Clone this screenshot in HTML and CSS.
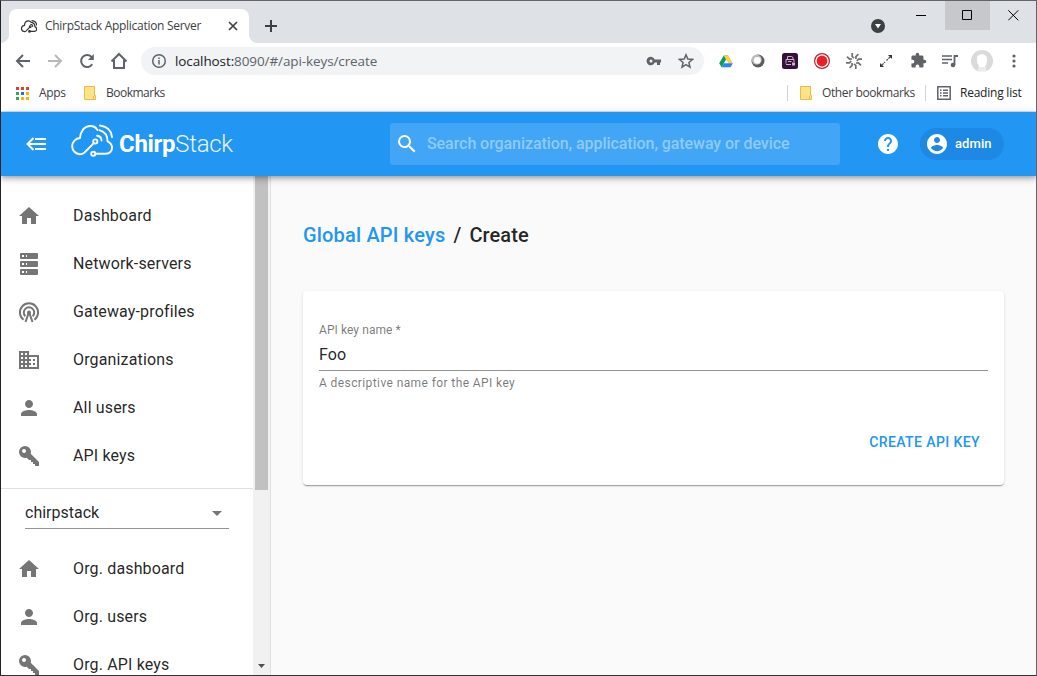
FILE: index.html
```
<!DOCTYPE html>
<html lang="en">
<head>
<meta charset="utf-8">
<title>ChirpStack Application Server</title>
<link rel="stylesheet" href="styles.css">
</head>
<body>
<svg class="defs" width="0" height="0" aria-hidden="true">
  <symbol id="home" viewBox="0 0 24 24"><path d="M10 20v-6h4v6h5v-8h3L12 3 2 12h3v8z"/></symbol>
  <symbol id="person" viewBox="0 0 24 24"><path d="M12 12c2.210 0 4-1.790 4-4s-1.790-4-4-4-4 1.790-4 4 1.790 4 4 4zm0 2c-2.670 0-8 1.340-8 4v2h16v-2c0-2.660-5.330-4-8-4z"/></symbol>
  <symbol id="key" viewBox="0 0 24 24"><path fill-rule="evenodd" d="M22 19V22H18V20H16V18H14V16H12L9.740 13.740C9.190 13.910 8.610 14 8 14A6 6 0 0 1 2 8A6 6 0 0 1 8 2A6 6 0 0 1 14 8C14 8.610 13.910 9.190 13.740 9.740L22 18V19M7 5A2 2 0 0 0 5 7A2 2 0 0 0 7 9A2 2 0 0 0 9 7A2 2 0 0 0 7 5Z"/></symbol>
  <symbol id="cloud" viewBox="0 0 42 34"><g fill="none" stroke="currentColor" stroke-linecap="round" stroke-linejoin="round"><path d="M22.600 19.300L13.500 28.500Q11.500 30.300 9 30.300C4.500 30 1.200 26.500 1.200 22.300c0-4.500 3.300-8 7.800-8.300C9.500 7 13.500 2 19.500 2c3.200 0 5.500 1.400 7 4M24.500 29.700h10.500c3.500 0 6-2.700 6-5.700 0-3-1.500-5.500-4.500-6.700 0-5-2.500-9.500-8-11.100"/><circle cx="24.300" cy="17.500" r="2.100"/><circle cx="22.300" cy="29.800" r="2.100"/><path d="M26 11.700c3 .3 4.500 2 4.500 4.800M29 1.500c7 1 11.500 5 12 11.500"/></g></symbol>
</svg>
<div class="window">
  <div class="tabstrip">
    <div class="tab">
      <svg class="favicon" width="16" height="13"><use href="#cloud"/></svg>
      <span class="tab-title">ChirpStack Application Server</span>
      <svg class="tab-close" width="10" height="10" viewBox="0 0 10 10"><path d="M1 1l8 8M9 1L1 9"/></svg>
    </div>
    <svg class="newtab" width="14" height="14" viewBox="0 0 14 14"><path d="M7 1v12M1 7h12"/></svg>
    <svg class="tabsearch" width="14" height="14" viewBox="0 0 14 14"><circle cx="7" cy="7" r="7" fill="#3c4043"/><path d="M4 5h6L7 9.500z" fill="#fff"/></svg>
    <div class="controls">
      <span class="control"><svg width="11" height="11" viewBox="0 0 11 11"><path d="M0 5.500h10"/></svg></span>
      <span class="control hover"><svg width="11" height="11" viewBox="0 0 11 11"><path d="M.5 .5h9v9h-9z"/></svg></span>
      <span class="control"><svg width="11" height="11" viewBox="0 0 11 11"><path d="M.3 .3l10 10M10.300 .3l-10 10"/></svg></span>
    </div>
  </div>
  <div class="toolbar">
    <span class="tool"><svg width="16" height="16" viewBox="0 0 16 16" class="line"><path d="M15 8H2M8 2L2 8l6 6"/></svg></span>
    <span class="tool faded"><svg width="16" height="16" viewBox="0 0 16 16" class="line"><path d="M1 8h13M8 2l6 6-6 6"/></svg></span>
    <span class="tool"><svg width="16" height="16" viewBox="0 0 16 16" class="line"><path d="M13.200 11.200A6 6 0 1 1 12.300 3.700l1.200 1.500"/><path d="M14.800 1v6H9z" fill="#5f6368" stroke="none"/></svg></span>
    <span class="tool"><svg width="18" height="18" viewBox="0 0 18 18" class="line"><path d="M1.500 9.500L9 2l7.500 7.500M4 8v8h10V8"/></svg></span>
    <div class="omnibox">
      <svg width="16" height="16" viewBox="0 0 16 16" class="info"><circle cx="8" cy="8" r="6.300"/><path d="M8 7v4.500M8 4.500v1.500"/></svg>
      <span class="url"><b>localhost:</b>8090/#/api-keys/create</span>
      <svg class="passkey" width="16" height="10" viewBox="0 0 16 10"><path fill-rule="evenodd" d="M8.700 3.600A4.200 4.200 0 1 0 8.700 6.400H11V9h3V6.400h1V3.600zM5 6.500a1.500 1.500 0 1 1 0-3 1.500 1.500 0 0 1 0 3z"/></svg>
      <svg class="star" width="16" height="16" viewBox="0 0 16 16"><path d="M8 1.800l1.800 4.300 4.700.4-3.600 3 1.100 4.600L8 11.700l-4 2.400 1.100-4.600-3.600-3 4.700-.4z"/></svg>
    </div>
    <span class="tool"><svg width="14" height="13" viewBox="0 0 14 13"><path d="M4.700 .5h4.600L7 4.600 2.600 12.300.2 8.200z" fill="#0b9d58"/><path d="M4.700.5h4.600l4.500 7.800H9.300z" fill="#ffcf3f"/><path d="M2.600 12.300l2.300-4h9l-2.400 4z" fill="#2684fc"/></svg></span>
    <span class="tool"><svg width="14" height="14" viewBox="0 0 14 14"><circle cx="7" cy="7" r="6.500" fill="#5c5c5c"/><circle cx="5.700" cy="5.700" r="5" fill="#bbb"/><circle cx="6.300" cy="6.300" r="3.400" fill="#fff"/></svg></span>
    <span class="tool"><svg width="16" height="16" viewBox="0 0 16 16"><rect width="16" height="16" rx="2.500" fill="#351039"/><path d="M5.500 6.500V3.500h4l1.500 1v2M4 10.500v-4h8V9M4 11.500h5M6 8.500h3.500" fill="none" stroke="#c9b4cc"/><path d="M10 9.500h3v3h-3z" fill="#c9b4cc"/></svg></span>
    <span class="tool"><svg width="16" height="16" viewBox="0 0 16 16"><circle cx="8" cy="8" r="7.400" fill="#fff" stroke="#b7232c" stroke-width="1.200"/><circle cx="8" cy="8" r="5.400" fill="#ee1c25"/></svg></span>
    <span class="tool"><svg width="16" height="16" viewBox="0 0 16 16"><g fill="none" stroke="#707070" stroke-width="1.700"><path id="spoke" d="M8 5.200L6.200 3.500V0"/><use href="#spoke" transform="rotate(45 8 8)"/><use href="#spoke" transform="rotate(90 8 8)"/><use href="#spoke" transform="rotate(135 8 8)"/><use href="#spoke" transform="rotate(180 8 8)"/><use href="#spoke" transform="rotate(225 8 8)"/><use href="#spoke" transform="rotate(270 8 8)"/><use href="#spoke" transform="rotate(315 8 8)"/></g></svg></span>
    <span class="tool"><svg width="14" height="14" viewBox="0 0 14 14"><path d="M9 1h4v4zM1 9v4h4z" fill="#333"/><path d="M11.500 2.500l-4 4M2.500 11.500L6 8" stroke="#555" stroke-width="1.400" stroke-dasharray="3 .8"/></svg></span>
    <span class="tool shift"><svg width="17" height="17" viewBox="0 0 24 24" fill="#5f6368"><path d="M20.500 11H19V7c0-1.100-.9-2-2-2h-4V3.500a2.500 2.500 0 0 0-5 0V5H4c-1.100 0-2 .9-2 2v3.800h1.500a2.700 2.700 0 0 1 0 5.400H2V20c0 1.100.9 2 2 2h3.800v-1.500a2.700 2.700 0 0 1 5.400 0V22H17c1.100 0 2-.9 2-2v-4h1.500a2.500 2.500 0 0 0 0-5z"/></svg></span>
    <span class="tool"><svg width="16" height="14" viewBox="0 0 16 14"><path d="M0 2h10M0 5.500h10M0 9h6" stroke="#5f6368" stroke-width="1.600"/><path d="M12.500 11V2H16" fill="none" stroke="#5f6368" stroke-width="1.800"/><circle cx="11" cy="11" r="2.300" fill="#5f6368"/></svg></span>
    <span class="tool"><svg width="22" height="22" viewBox="0 0 22 22"><circle cx="11" cy="11" r="11" fill="#dadada"/><path d="M6 8c0-5 10-5 10 1 0 5-1 6-2 7l1 5q-4 2-8 0l1-5C6 14 6 11 6 8z" fill="#fff"/><path d="M8 17h6l1 4q-4 1.500-8 0z" fill="#e9edf1"/></svg></span>
    <span class="tool"><svg width="4" height="14" viewBox="0 0 4 14" fill="#5f6368"><circle cx="2" cy="2" r="1.600"/><circle cx="2" cy="7" r="1.600"/><circle cx="2" cy="12" r="1.600"/></svg></span>
  </div>
  <div class="bookmarks">
    <svg class="apps" width="13" height="13" viewBox="0 0 13 13"><path fill="#ea3a30" d="M0 0h3v3H0zM5 0h3v3H5zM10 0h3v3h-3z"/><path fill="#34a853" d="M0 5h3v3H0zM0 10h3v3H0z"/><path fill="#1a73e8" d="M5 5h3v3H5z"/><path fill="#fbb10b" d="M10 5h3v3h-3zM5 10h3v3H5zM10 10h3v3h-3z"/></svg>
    <span class="bm-apps">Apps</span>
    <svg class="folder" width="12" height="14" viewBox="0 0 12 14"><path d="M.5 .5h10v9h1v4H.5z"/><path d="M9.500 13v-3"/></svg>
    <span class="bm-folder">Bookmarks</span>
    <i class="sep first"></i>
    <svg class="folder other" width="12" height="14" viewBox="0 0 12 14"><path d="M.5 .5h10v9h1v4H.5z"/><path d="M9.500 13v-3"/></svg>
    <span class="bm-other">Other bookmarks</span>
    <i class="sep"></i>
    <svg class="list-icon" width="14" height="14" viewBox="0 0 14 14"><path d="M.8.8h12.400v12.400H.8zM3 4.200h1.500M3 7h1.500M3 9.800h1.500M6 4.200h5M6 7h5M6 9.800h5"/></svg>
    <span class="bm-reading">Reading list</span>
  </div>
  <div class="app">
    <header class="appbar">
      <svg class="menu" width="20" height="14" viewBox="0 0 20 14"><path d="M9 2h11M3 7h17M9 12h11M7.500 1l-6 6 6 6"/></svg>
      <div class="logo"><svg width="42" height="34"><use href="#cloud"/></svg><span class="wordmark"><b>Chirp</b><span>Stack</span></span></div>
      <div class="search"><svg width="24" height="24" viewBox="0 0 24 24"><path d="M15.500 14h-.79l-.28-.27A6.470 6.470 0 0 0 16 9.500 6.500 6.500 0 1 0 9.500 16c1.610 0 3.090-.59 4.230-1.570l.27.28v.79l5 4.990L20.490 19l-4.990-5zm-6 0C7.010 14 5 11.990 5 9.500S7.010 5 9.500 5 14 7.010 14 9.500 11.990 14 9.500 14z"/></svg><span>Search organization, application, gateway or device</span></div>
      <svg class="help" width="24" height="24" viewBox="0 0 24 24"><path d="M12 2C6.480 2 2 6.480 2 12s4.480 10 10 10 10-4.480 10-10S17.520 2 12 2zm1 17h-2v-2h2v2zm2.070-7.750l-.9.920C13.450 12.900 13 13.500 13 15h-2v-.5c0-1.100.45-2.100 1.170-2.830l1.240-1.260c.37-.36.59-.86.59-1.410 0-1.100-.9-2-2-2s-2 .9-2 2H8c0-2.210 1.790-4 4-4s4 1.790 4 4c0 .88-.36 1.680-.93 2.250z"/></svg>
      <div class="chip"><svg width="24" height="24" viewBox="0 0 24 24"><path d="M12 2C6.480 2 2 6.480 2 12s4.480 10 10 10 10-4.480 10-10S17.520 2 12 2zm0 3c1.660 0 3 1.340 3 3s-1.340 3-3 3-3-1.340-3-3 1.340-3 3-3zm0 14.200c-2.500 0-4.710-1.280-6-3.220.03-1.990 4-3.080 6-3.080 1.990 0 5.970 1.090 6 3.080-1.290 1.940-3.500 3.220-6 3.220z"/></svg><span>admin</span></div>
    </header>
    <div class="body">
      <nav class="sidebar">
        <ul class="menu-list">
          <li><svg><use href="#home"/></svg>Dashboard</li>
          <li><svg viewBox="0 0 24 24"><path fill-rule="evenodd" d="M4 1h16a1 1 0 0 1 1 1v4a1 1 0 0 1-1 1H4a1 1 0 0 1-1-1V2a1 1 0 0 1 1-1zM4 9h16a1 1 0 0 1 1 1v4a1 1 0 0 1-1 1H4a1 1 0 0 1-1-1v-4a1 1 0 0 1 1-1zM4 17h16a1 1 0 0 1 1 1v4a1 1 0 0 1-1 1H4a1 1 0 0 1-1-1v-4a1 1 0 0 1 1-1zM9 5h1V3H9zM9 13h1v-2H9zM9 21h1v-2H9zM5 3v2h2V3zM5 11v2h2v-2zM5 19v2h2v-2z"/></svg>Network-servers</li>
          <li><svg viewBox="0 0 24 24"><g fill="none" stroke="#757575" stroke-width="2"><path d="M6.500 19.700A9.100 9.100 0 1 1 17.500 19.700M8.300 16.200A5.200 5.200 0 1 1 15.700 16.200"/><path d="M8.500 22l3-8.500h1L15.500 22"/></g><circle cx="12" cy="12.500" r="2"/></svg>Gateway-profiles</li>
          <li><svg viewBox="0 0 24 24"><path d="M12 7V3H2v18h20V7H12zM6 19H4v-2h2v2zm0-4H4v-2h2v2zm0-4H4V9h2v2zm0-4H4V5h2v2zm4 12H8v-2h2v2zm0-4H8v-2h2v2zm0-4H8V9h2v2zm0-4H8V5h2v2zm10 12h-8v-2h2v-2h-2v-2h2v-2h-2V9h8v10zm-2-8h-2v2h2v-2zm0 4h-2v2h2v-2z"/></svg>Organizations</li>
          <li><svg><use href="#person"/></svg>All users</li>
          <li><svg><use href="#key"/></svg>API keys</li>
        </ul>
        <div class="org"><div class="select"><span>chirpstack</span><svg width="24" height="24" viewBox="0 0 24 24"><path d="M7 10l5 5 5-5z"/></svg></div></div>
        <ul class="menu-list org-list">
          <li><svg><use href="#home"/></svg>Org. dashboard</li>
          <li><svg><use href="#person"/></svg>Org. users</li>
          <li><svg><use href="#key"/></svg>Org. API keys</li>
        </ul>
      </nav>
      <div class="scrollbar"><div class="thumb"></div><svg width="7" height="4" viewBox="0 0 7 4"><path d="M0 0h7L3.500 4z"/></svg></div>
      <main class="content">
        <h1><a>Global API keys</a><span class="slash">/</span><span class="current">Create</span></h1>
        <section class="card">
          <label>API key name *</label>
          <div class="input">Foo</div>
          <p class="helper">A descriptive name for the API key</p>
          <div class="actions"><span class="button">CREATE API KEY</span></div>
        </section>
      </main>
    </div>
  </div>
</div>
</body>
</html>
```
FILE: styles.css
```
* { box-sizing: border-box; }
body { margin: 0; font-family: Roboto, sans-serif; background: #fff; }
svg { flex: none; display: block; }
.defs { position: absolute; }
.window { width: 1037px; height: 676px; border: 1px solid #636568; border-left-color: #222124; border-bottom-color: #333; display: flex; flex-direction: column; overflow: hidden; }
.tabstrip { height: 42px; flex: none; background: #dee1e6; display: flex; align-items: flex-start; }
.tab { position: relative; width: 240px; height: 34px; margin: 8px 0 0 8px; padding: 0 11px 0 12px; background: #fff; border-radius: 8px 8px 0 0; display: flex; align-items: center; }
.tab::before, .tab::after { content: ""; position: absolute; bottom: 0; width: 8px; height: 8px; }
.tab::before { left: -8px; background: radial-gradient(circle at 0 0, transparent 7.500px, #fff 8px); }
.tab::after { right: -8px; background: radial-gradient(circle at 8px 0, transparent 7.500px, #fff 8px); }
.favicon { color: #333; stroke-width: 3.200; }
.tab-title { margin-left: 8px; font: 12px/16px "Open Sans", sans-serif; letter-spacing: -.29px; color: #3c4043; white-space: nowrap; padding-bottom: 1px; }
.tab-close { margin-left: auto; stroke: #3c4043; stroke-width: 1.700; }
.newtab { margin: 18px 0 0 15px; stroke: #3c4043; stroke-width: 2; }
.tabsearch { margin: 18px 14px 0 auto; }
.controls { display: flex; }
.control { width: 45px; height: 29px; display: grid; place-items: center; }
.control:first-child { width: 46px; }
.control:last-child { width: 46px; }
.control.hover { background: #c6c8cc; }
.control svg { stroke: #000; fill: none; stroke-width: 1; }
.controls .control:first-child { width: 47px; }
.tabsearch + .controls { margin-left: -1px; }
.toolbar { height: 36px; flex: none; display: flex; align-items: center; padding: 0 6px; }
.tool { width: 32px; height: 32px; flex: none; display: grid; place-items: center; }
.shift { padding-bottom: 1px; }
.faded { opacity: .45; }
.line { fill: none; stroke: #5f6368; stroke-width: 2; }
.omnibox { flex: 1; height: 28px; margin: 0 6px 0 6px; padding: 0 10px; border-radius: 14px; background: #f1f3f4; display: flex; align-items: center; }
.info { fill: none; stroke: #5f6368; stroke-width: 1.500; }
.url { margin-left: 8px; font: 13.500px "Open Sans", sans-serif; letter-spacing: -.1px; color: #5f6368; white-space: nowrap; }
.url b { font-weight: 400; color: #202124; }
.passkey { margin-left: auto; fill: #5f6368; }
.star { margin-left: 16px; fill: none; stroke: #5f6368; stroke-width: 1.500; }
.bookmarks { height: 32px; flex: none; padding: 0 14px 4px 15px; display: flex; align-items: center; font: 12px/16px "Open Sans", sans-serif; letter-spacing: -.35px; color: #3c4043; white-space: nowrap; }
.bookmarks span { padding-bottom: 1px; }
.folder { fill: #ffe38b; stroke: #e7bd3c; }
.bm-apps { width: 45px; margin-left: 10px; }
.bm-folder { margin-left: 10px; letter-spacing: -.5px; }
.sep { width: 1px; height: 16px; background: #d0d2d5; margin-right: 11px; }
.sep.first { margin: 0 12px 0 auto; }
.bm-other { width: 103px; margin-left: 10px; letter-spacing: -.38px; }
.list-icon { fill: none; stroke: #5f6368; stroke-width: 1.500; }
.bm-reading { width: 62px; margin-left: 9px; letter-spacing: -.23px; color: #202124; }
.bm-folder { letter-spacing: -.5px; }
.app { flex: 1; min-height: 0; border-top: 1px solid #dadce0; display: flex; flex-direction: column; color: rgba(0,0,0,.87); }
.appbar { position: relative; z-index: 1; flex: none; height: 64px; padding: 0 32px 0 25px; background: #2196f3; box-shadow: 0 2px 4px -1px rgba(0,0,0,.2), 0 4px 5px rgba(0,0,0,.14), 0 1px 10px rgba(0,0,0,.12); display: flex; align-items: center; color: #fff; }
.menu { fill: none; stroke: #fff; stroke-width: 2; }
.logo { margin-left: 25px; width: 319px; display: flex; align-items: center; padding-bottom: 6px; stroke-width: 1.900; }
.wordmark { margin: 5px 0 0 6px; font-size: 24px; line-height: 28px; letter-spacing: -.3px; white-space: nowrap; }
.wordmark b { font-weight: 700; }
.wordmark span { font-weight: 300; opacity: .9; }
.search { width: 450px; height: 42px; padding-left: 5px; border-radius: 3px; background: #42a5f5; display: flex; align-items: center; fill: #fff; font-size: 16px; font-weight: 500; letter-spacing: -.07px; white-space: nowrap; }
.search span { margin-left: 8px; padding-bottom: 2px; color: #90caf9; }
.help { margin-left: auto; margin-right: 20px; fill: #fff; }
.chip { width: 84px; height: 32px; padding-left: 5px; border-radius: 16px; background: #1e88e5; display: flex; align-items: center; fill: #fff; font-size: 13px; font-weight: 500; }
.chip span { margin-left: 6px; padding-bottom: 1px; letter-spacing: .1px; }
.body { flex: 1; min-height: 0; display: flex; }
.sidebar { width: 252px; overflow: hidden; background: #fff; }
.menu-list { margin: 0; padding: 16px 0 8px; list-style: none; }
.menu-list li { height: 48px; padding-left: 16px; display: flex; align-items: center; gap: 32px; font-size: 16px; letter-spacing: .15px; line-height: 24px; padding-bottom: 1px; }
.menu-list svg { width: 24px; height: 24px; fill: #757575; }
.org { height: 57px; border-top: 1px solid #e0e0e0; padding: 8px 24px; }
.select { height: 32px; border-bottom: 1px solid #949494; display: flex; justify-content: space-between; align-items: center; font-size: 16px; letter-spacing: 0; fill: #757575; }
.org-list { padding-top: 0; }
.scrollbar { width: 17px; background: #f1f1f1; padding: 0 2px 7px; display: flex; flex-direction: column; justify-content: space-between; align-items: center; fill: #505050; }
.thumb { width: 13px; height: 314px; background: #c1c1c1; }
.content { flex: 1; border-left: 1px solid #e0e0e0; background: #fafafa; padding: 43px 32px 0; }
h1 { margin: 0; font-size: 20px; line-height: 32px; font-weight: 500; letter-spacing: .15px; display: flex; }
h1 a { color: #2196f3; letter-spacing: .18px; }
.slash { margin: 0 8px; }
.current { letter-spacing: .1px; }
.card { margin-top: 40px; height: 194px; padding: 32px 16px 0; border-radius: 4px; background: #fff; box-shadow: 0 2px 1px -1px rgba(0,0,0,.2), 0 1px 1px rgba(0,0,0,.14), 0 1px 3px rgba(0,0,0,.12); }
label, .helper { display: block; margin: 0; font-size: 12px; color: rgba(0,0,0,.54); }
label { line-height: 14px; letter-spacing: .08px; }
.input { height: 34px; padding-top: 8px; border-bottom: 1px solid #949494; font-size: 16px; line-height: 19px; letter-spacing: .15px; }
.helper { margin-top: 2px; line-height: 20px; letter-spacing: .4px; }
.actions { margin-top: 31px; height: 36px; display: flex; justify-content: flex-end; align-items: center; padding-right: 8px; }
.button { color: #2196f3; font-size: 14px; font-weight: 500; letter-spacing: .4px; }
```
